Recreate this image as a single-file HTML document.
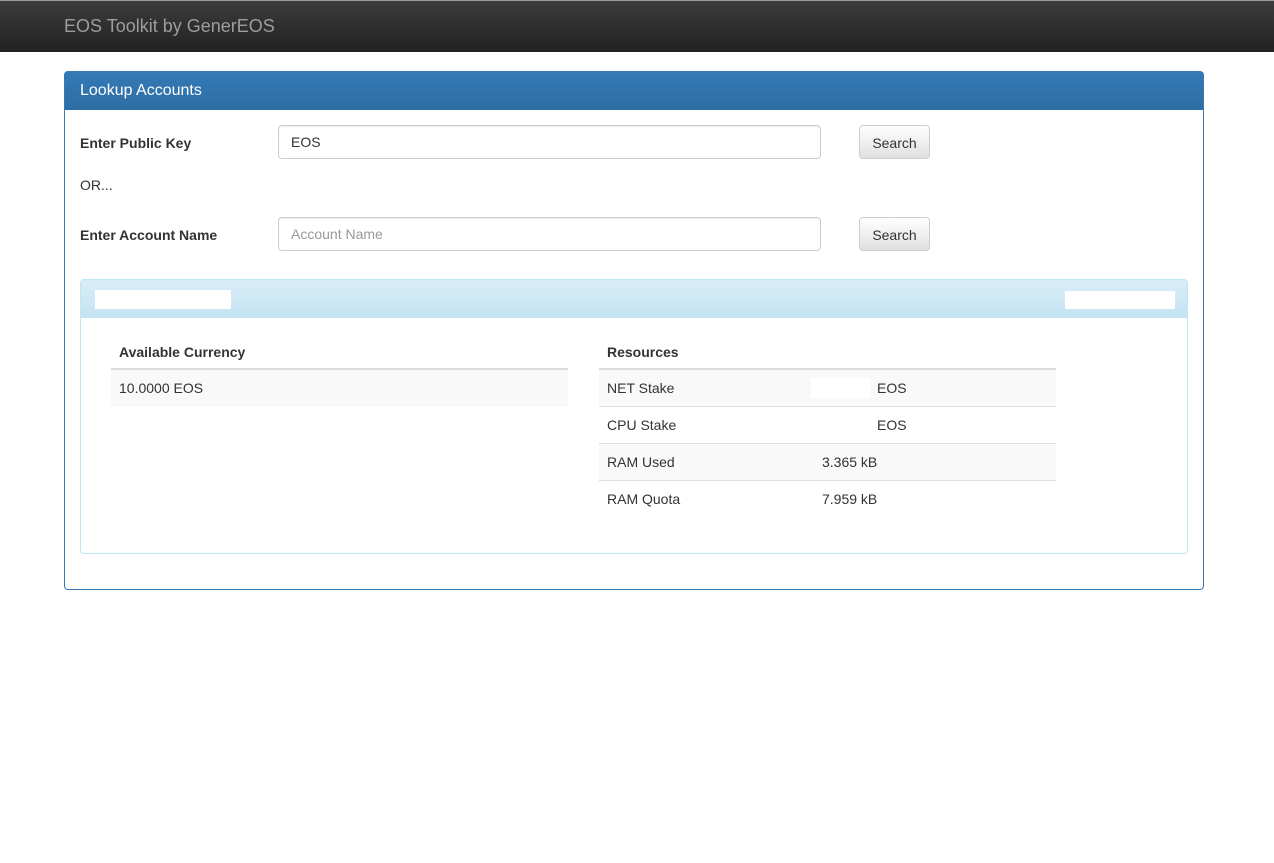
<!DOCTYPE html>
<html><head><style>
*{box-sizing:border-box;margin:0;padding:0}
body{width:1274px;height:863px;background:#fff;font-family:"Liberation Sans",sans-serif;font-size:14px;color:#333;position:relative;overflow:hidden}
.nav{position:absolute;left:0;top:0;width:1274px;height:52px;background:linear-gradient(#3c3c3c,#222);border-top:1px solid #999;}
.nav span{position:absolute;left:64px;top:15px;font-size:18px;color:#9d9d9d}
.panel{position:absolute;left:64px;top:71px;width:1140px;height:519px;border:1px solid #337ab7;border-radius:4px}
.ph{height:38px;background:linear-gradient(#337ab7,#2e6da4);color:#fff;font-size:16px;padding:10px 15px}
.abs{position:absolute}
.lbl{font-weight:bold}
.inp{position:absolute;left:213px;width:543px;height:34px;border:1px solid #ccc;border-radius:4px;padding:8px 12px;font-size:14px;box-shadow:inset 0 1px 1px rgba(0,0,0,.075)}
.btn{position:absolute;left:794px;width:71px;height:34px;border:1px solid #ccc;border-radius:4px;background:linear-gradient(#fff,#e0e0e0);text-align:center;padding-top:9px;font-size:14px}
.inner{position:absolute;left:15px;top:207px;width:1108px;height:275px;border:1px solid #bce8f1;border-radius:4px}
.ih{height:38px;background:linear-gradient(#d9edf7,#c4e3f3);position:relative}
.w{position:absolute;background:#fff}
.row{position:absolute;height:37px;padding:10px 8px}
</style></head><body>
<div class="nav"><span>EOS Toolkit by GenerEOS</span></div>
<div class="panel">
<div class="ph">Lookup Accounts</div>
<div class="abs lbl" style="left:15px;top:63px">Enter Public Key</div>
<div class="inp" style="top:53px">EOS</div>
<div class="btn" style="top:53px">Search</div>
<div class="abs" style="left:15px;top:105px">OR...</div>
<div class="abs lbl" style="left:15px;top:155px">Enter Account Name</div>
<div class="inp" style="top:145px;color:#999">Account Name</div>
<div class="btn" style="top:145px">Search</div>
<div class="inner">
<div class="ih"><div class="w" style="left:14px;top:10px;width:136px;height:19px"></div><div class="w" style="left:984px;top:11px;width:110px;height:18px"></div></div>
<div class="abs lbl" style="left:38px;top:64px">Available Currency</div>
<div class="abs" style="left:30px;top:88px;width:457px;height:2px;background:#ddd"></div>
<div class="row" style="left:30px;top:90px;width:457px;background:#f9f9f9">10.0000 EOS</div>
<div class="abs lbl" style="left:526px;top:64px">Resources</div>
<div class="abs" style="left:518px;top:88px;width:457px;height:2px;background:#ddd"></div>
<div class="row" style="left:518px;top:90px;width:457px;background:#f9f9f9;border-bottom:1px solid #ddd">NET Stake<span class="abs" style="left:278px;top:10px">EOS</span><span class="abs w" style="left:212px;top:8px;width:60px;height:20px"></span></div>
<div class="row" style="left:518px;top:127px;width:457px;border-bottom:1px solid #ddd">CPU Stake<span class="abs" style="left:278px;top:10px">EOS</span></div>
<div class="row" style="left:518px;top:164px;width:457px;background:#f9f9f9;border-bottom:1px solid #ddd">RAM Used<span class="abs" style="left:223px;top:10px">3.365 kB</span></div>
<div class="row" style="left:518px;top:201px;width:457px">RAM Quota<span class="abs" style="left:223px;top:10px">7.959 kB</span></div>
</div>
</div>
</body></html>
